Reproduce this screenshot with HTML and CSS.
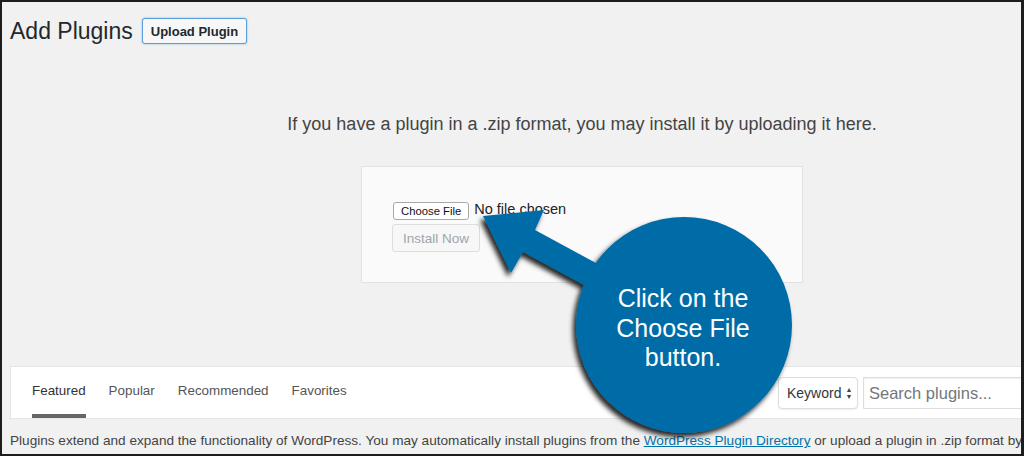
FILE: index.html
```html
<!DOCTYPE html>
<html lang="en">
<head>
<meta charset="utf-8">
<title>Add Plugins</title>
<link rel="stylesheet" href="styles.css">
</head>
<body>
<div class="frame">
  <div class="header">
    <h1 class="title">Add Plugins</h1>
    <button class="btn-upload">Upload Plugin</button>
  </div>

  <div class="upload-section">
    <p class="intro">If you have a plugin in a .zip format, you may install it by uploading it here.</p>
    <div class="upload-box">
      <div class="file-row">
        <button class="btn-file">Choose File</button>
        <span class="file-name">No file chosen</span>
      </div>
      <button class="btn-install" disabled>Install Now</button>
    </div>
  </div>

  <div class="filter-bar">
    <ul class="tabs">
      <li class="tab current">Featured</li>
      <li class="tab">Popular</li>
      <li class="tab">Recommended</li>
      <li class="tab">Favorites</li>
    </ul>
    <div class="search">
      <div class="select">Keyword <span class="arrows">&#9650;<br>&#9660;</span></div>
      <div class="search-input">Search plugins...</div>
    </div>
  </div>

  <p class="note">Plugins extend and expand the functionality of WordPress. You may automatically install plugins from the <a href="#">WordPress Plugin Directory</a> or upload a plugin in .zip format by</p>

  <svg class="callout" viewBox="0 0 1024 456" width="1024" height="456" aria-hidden="true">
    <defs>
      <filter id="sh" x="-20%" y="-20%" width="140%" height="140%">
        <feDropShadow dx="-3" dy="4" stdDeviation="2.5" flood-color="#000" flood-opacity="0.85"/>
      </filter>
    </defs>
    <g filter="url(#sh)" fill="#066ca7">
      <circle cx="684" cy="325" r="108"/>
      <polygon points="483,216 544,210 535,230 607,269 595,291 523,252 511,273"/>
    </g>
  </svg>
  <div class="callout-text">Click on the<br>Choose File<br>button.</div>
</div>
</body>
</html>
```

FILE: styles.css
```css
* { box-sizing: border-box; }
html, body { margin: 0; padding: 0; }
body {
  font-family: "Liberation Sans", Arial, sans-serif;
  color: #444;
  background: #fff;
}
.frame {
  position: relative;
  width: 1024px;
  height: 456px;
  border: 2px solid #1d1d1d;
  border-right-width: 3px;
  background: #f1f1f1;
  overflow: hidden;
}
.header {
  display: flex;
  align-items: center;
  gap: 9px;
  height: 26px;
  margin: 16px 0 0 8px;
}
.title {
  margin: 0;
  font-size: 23px;
  font-weight: 400;
  line-height: 26px;
  color: #23282d;
}
.btn-upload {
  height: 26px;
  padding: 0 8px;
  font-family: inherit;
  font-size: 13px;
  font-weight: 700;
  color: #23282d;
  background: #f7f7f7;
  border: 1px solid #5b9dd9;
  border-radius: 3px;
  box-shadow: 0 0 2px rgba(30,140,190,.6);
}
.upload-section {
  width: 800px;
  margin-left: 180px;
}
.intro {
  margin: 69px -40px 0;
  text-align: center;
  font-size: 18px;
  line-height: 22px;
  color: #444;
}
.upload-box {
  width: 442px;
  height: 117px;
  margin: 31px auto 0;
  padding: 35px 0 0 31px;
  background: #fafafa;
  border: 1px solid #e2e2e2;
}
.file-row {
  display: flex;
  align-items: center;
  gap: 5px;
}
.btn-file {
  height: 18px;
  padding: 0 7px;
  font-family: inherit;
  font-size: 11.3px;
  color: #111;
  background: #fff;
  border: 1px solid #a9a9a9;
  border-radius: 3px;
}
.file-name {
  font-size: 14.5px;
  color: #222;
  margin-top: -4px;
}
.btn-install {
  display: block;
  height: 28px;
  margin: 4px 0 0 -1px;
  padding: 0 10px;
  font-family: inherit;
  font-size: 13.5px;
  color: #a0a5aa;
  background: #f7f7f7;
  border: 1px solid #ddd;
  border-radius: 3px;
}
.filter-bar {
  display: flex;
  align-items: stretch;
  width: 1054px;
  height: 53px;
  margin: 83px 0 0 8px;
  padding-left: 21px;
  background: #fff;
  border: 1px solid #e5e5e5;
}
.tabs {
  display: flex;
  gap: 23px;
  margin: 0;
  padding: 0;
  list-style: none;
}
.tab {
  display: flex;
  align-items: center;
  padding-top: 0;
  font-size: 13.4px;
  color: #555;
  border-bottom: 4px solid transparent;
}
.tab.current {
  color: #333;
  border-bottom-color: #666;
}
.search {
  display: flex;
  align-items: center;
  gap: 5px;
  margin-left: auto;
}
.select {
  display: flex;
  align-items: center;
  gap: 4px;
  width: 80px;
  height: 32px;
  padding-left: 8px;
  font-size: 14px;
  color: #32373c;
  background: #fff;
  border: 1px solid #ddd;
  border-radius: 4px;
  box-shadow: 0 1px 2px rgba(0,0,0,.07);
}
.arrows {
  font-size: 7px;
  line-height: 7px;
  color: #444;
}
.search-input {
  width: 200px;
  height: 32px;
  padding: 6px 5px 0;
  font-size: 16.5px;
  color: #72777c;
  background: #fff;
  border: 1px solid #ddd;
  box-shadow: inset 0 1px 2px rgba(0,0,0,.07);
}
.note {
  margin: 13px 0 0 8px;
  width: 1100px;
  font-size: 13.6px;
  line-height: 18px;
  color: #444;
  white-space: nowrap;
}
.note a { color: #0073aa; }
.callout {
  position: absolute;
  left: -2px;
  top: -2px;
  pointer-events: none;
}
.callout-text {
  position: absolute;
  left: 561px;
  top: 282px;
  width: 240px;
  text-align: center;
  font-size: 25px;
  line-height: 29.5px;
  color: #fff;
}
```
